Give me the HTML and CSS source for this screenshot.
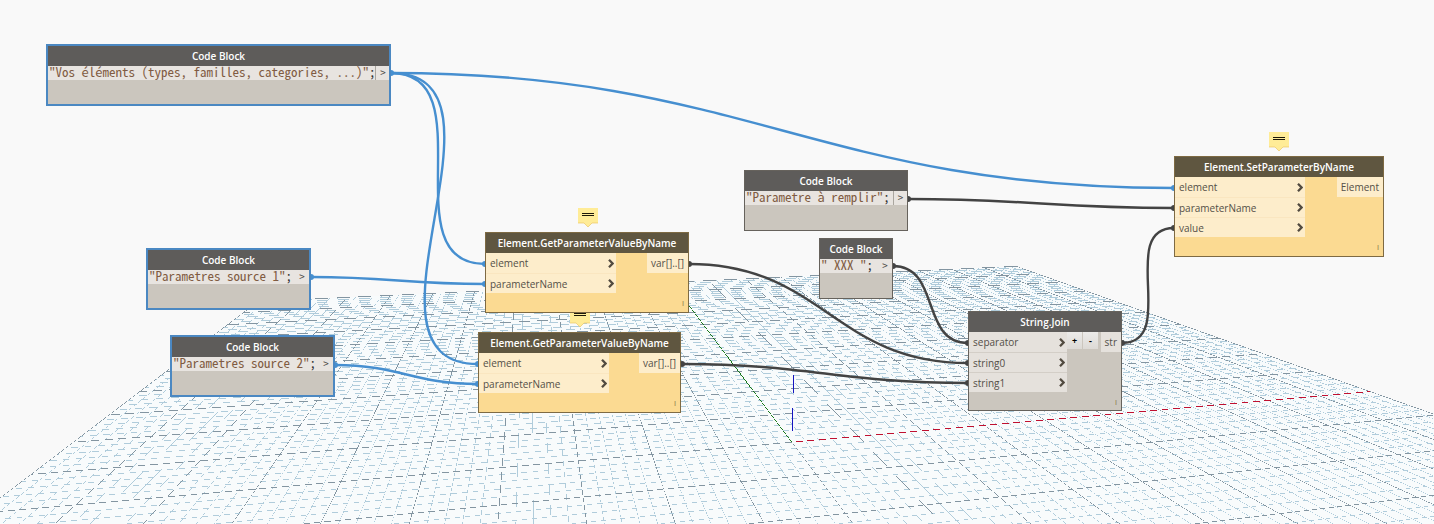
FILE: index.html
```html
<!DOCTYPE html>
<html lang="fr">
<head>
<meta charset="utf-8">
<title>Workspace</title>
<link rel="stylesheet" href="styles.css">
</head>
<body>
<main class="workspace">
  <svg class="layer" id="grid" aria-hidden="true"></svg>

  <svg class="layer" aria-hidden="true">
    <g class="wire wire-selected">
      <path d="M391 73C747 73 818 188 1174 188"/>
      <path d="M391 73C487 73 389 264 485 264"/>
      <path d="M391 73C528 73 341 364 478 364"/>
      <path d="M311 277C389 277 407 284 485 284"/>
      <path d="M335 365C400 365 413 384 478 384"/>
    </g>
    <g class="wire">
      <path d="M689 264C822 264 835 363 968 363"/>
      <path d="M682 364C811 364 839 383 968 383"/>
      <path d="M908 199C1028 199 1054 208 1174 208"/>
      <path d="M893 266C941 266 920 343 968 343"/>
      <path d="M1122 343C1179 343 1117 228 1174 228"/>
    </g>
    <g class="dot-selected">
      <circle cx="391" cy="73" r="3"/><circle cx="311" cy="277" r="3"/><circle cx="335" cy="365" r="3"/>
      <circle cx="1174" cy="188" r="3"/><circle cx="485" cy="264" r="3"/><circle cx="485" cy="284" r="3"/>
      <circle cx="478" cy="364" r="3"/><circle cx="478" cy="384" r="3"/>
    </g>
    <g class="dot">
      <circle cx="689" cy="264" r="3"/><circle cx="682" cy="364" r="3"/><circle cx="908" cy="199" r="3"/>
      <circle cx="893" cy="266" r="3"/><circle cx="1122" cy="343" r="3"/><circle cx="968" cy="343" r="3"/>
      <circle cx="968" cy="363" r="3"/><circle cx="968" cy="383" r="3"/><circle cx="1174" cy="208" r="3"/>
      <circle cx="1174" cy="228" r="3"/>
    </g>
  </svg>

  <svg class="note note-get-1" viewBox="0 0 20 20" aria-hidden="true"><use href="#note"/></svg>
  <svg class="note note-get-2" viewBox="0 0 20 20" aria-hidden="true"><use href="#note"/></svg>
  <svg class="note note-set" viewBox="0 0 20 20" aria-hidden="true"><use href="#note"/></svg>

  <section class="node code selected code-elements">
    <h2 class="title">Code Block</h2>
    <div class="editor"><code>"Vos éléments (types, familles, categories, ...)"<b>;</b></code><span class="out ruled">&gt;</span></div>
  </section>
  <section class="node code selected code-source-1">
    <h2 class="title">Code Block</h2>
    <div class="editor"><code>"Parametres source 1"<b>;</b></code><span class="out">&gt;</span></div>
  </section>
  <section class="node code selected code-source-2">
    <h2 class="title">Code Block</h2>
    <div class="editor"><code>"Parametres source 2"<b>;</b></code><span class="out">&gt;</span></div>
  </section>
  <section class="node code code-target">
    <h2 class="title">Code Block</h2>
    <div class="editor"><code>"Parametre à remplir"<b>;</b></code><span class="out ruled">&gt;</span></div>
  </section>
  <section class="node code code-separator">
    <h2 class="title">Code Block</h2>
    <div class="editor"><code>" XXX "<b>;</b></code><span class="out">&gt;</span></div>
  </section>

  <section class="node warning get-1">
    <h2 class="title">Element.GetParameterValueByName</h2>
    <div class="ports">
      <ul class="inputs">
        <li>element<svg class="chevron" viewBox="0 0 6 9"><use href="#chevron"/></svg></li>
        <li>parameterName<svg class="chevron" viewBox="0 0 6 9"><use href="#chevron"/></svg></li>
      </ul>
      <span class="output">var[]..[]</span>
    </div>
    <footer class="lacing">l</footer>
  </section>
  <section class="node warning get-2">
    <h2 class="title">Element.GetParameterValueByName</h2>
    <div class="ports">
      <ul class="inputs">
        <li>element<svg class="chevron" viewBox="0 0 6 9"><use href="#chevron"/></svg></li>
        <li>parameterName<svg class="chevron" viewBox="0 0 6 9"><use href="#chevron"/></svg></li>
      </ul>
      <span class="output">var[]..[]</span>
    </div>
    <footer class="lacing">l</footer>
  </section>
  <section class="node warning set">
    <h2 class="title">Element.SetParameterByName</h2>
    <div class="ports">
      <ul class="inputs">
        <li>element<svg class="chevron" viewBox="0 0 6 9"><use href="#chevron"/></svg></li>
        <li>parameterName<svg class="chevron" viewBox="0 0 6 9"><use href="#chevron"/></svg></li>
        <li>value<svg class="chevron" viewBox="0 0 6 9"><use href="#chevron"/></svg></li>
      </ul>
      <span class="output">Element</span>
    </div>
    <footer class="lacing">l</footer>
  </section>
  <section class="node join">
    <h2 class="title">String.Join</h2>
    <div class="ports">
      <ul class="inputs">
        <li>separator<svg class="chevron" viewBox="0 0 6 9"><use href="#chevron"/></svg></li>
        <li>string0<svg class="chevron" viewBox="0 0 6 9"><use href="#chevron"/></svg></li>
        <li>string1<svg class="chevron" viewBox="0 0 6 9"><use href="#chevron"/></svg></li>
      </ul>
      <div class="steppers"><button type="button">+</button><button type="button">-</button></div>
      <span class="output">str</span>
    </div>
    <footer class="lacing">l</footer>
  </section>
</main>

<svg class="defs" aria-hidden="true">
  <symbol id="chevron" viewBox="0 0 6 9"><path d="M1 .8 4.6 4.5 1 8.2" fill="none" stroke="#524b40" stroke-width="2.3"/></symbol>
  <symbol id="note" viewBox="0 0 20 20">
    <path d="M0 0H20V15H14L10 19 6 15H0Z" fill="#ffec97"/>
    <path d="M0 15H6L10 19 14 15H20" fill="none" stroke="#ecc766" stroke-width=".7"/>
    <path d="M4 5.5H16M4 7.5H16" stroke="#1c1808" stroke-width="1.2"/>
  </symbol>
</svg>
<script src="grid.js"></script>
</body>
</html>
```
FILE: grid.js
```js
// Perspective ground plane: 10 major cells each side of the origin, 5 minor cells per major.
const NS = "http://www.w3.org/2000/svg";
const svg = document.getElementById("grid");
const origin = [791.5, 442];
const vanishX = [4824, 89];
const vanishY = [530, 94];
const limit = 2400;

function project(x, y) {
  const s = x * 0.01675, t = y * 0.08505, w = 1 + s + t;
  return [0, 1].map(i => (origin[i] + s * vanishX[i] + t * vanishY[i]) / w);
}
function add(d, name) {
  const path = document.createElementNS(NS, "path");
  path.setAttribute("d", d);
  path.setAttribute("class", name);
  svg.append(path);
}

// Draws a line thinner than a pixel: it shows only where it passes near a pixel centre,
// which breaks shallow lines into dashes and diagonal ones into dots.
function thin(a, b, c, d, weight) {
  const p = project(a, b), q = project(c, d);
  const across = Math.abs(q[0] - p[0]) > Math.abs(q[1] - p[1]);
  const k = across ? 0 : 1, j = 1 - k;
  const slope = (q[k] - p[k]) / (q[j] - p[j] || 0.001);
  const lo = Math.min(p[j], q[j]), hi = Math.min(Math.max(p[j], q[j]), limit);
  let out = "";
  for (let n = Math.floor(lo); n < hi; n++) {
    const from = Math.max(lo, n), to = Math.min(hi, n + weight);
    if (to <= from) continue;
    const u = p[k] + (from - p[j]) * slope, v = p[k] + (to - p[j]) * slope;
    const u1 = Math.round(Math.min(u, v)), v1 = Math.round(Math.max(u, v));
    if (v1 <= u1 || v1 < 0 || u1 > limit) continue;
    out += across ? `M${u1} ${n + 0.5}H${v1}` : `M${n + 0.5} ${u1}V${v1}`;
  }
  return out;
}

const near = -4.6;
const corners = [[-10, near], [-10, 10], [10, 10], [10, near]].map(c => project(...c).join(" "));
add(`M${corners.join("L")}Z`, "ground");
let minor = "", major = "";
for (let i = -50; i <= 50; i++) {
  const p = i / 5, weight = i % 5 ? 0.5 : 0.6;
  let d = thin(p, near, p, 10, weight);
  if (p >= near) d += thin(-10, p, 10, p, weight);
  if (i % 5) minor += d; else major += d;
}
add(minor, "minor");
add(major, "major");
add(thin(0, 0, 10, 0, 0.6), "axis-x");
add(thin(0, 0, 0, 10, 0.8), "axis-y");
add("M793 375h1v18h-1zM792 408h1v23h-1z", "axis-z");
```
FILE: styles.css
```css
* { box-sizing: border-box; }
body {
  margin: 0;
  background: #f9f9f9;
  font-family: "Open Sans", "Noto Sans", sans-serif;
}
.workspace {
  position: relative;
  height: 100vh;
  overflow: hidden;
}
.layer {
  position: absolute;
  inset: 0;
  width: 100%;
  height: 100%;
}
.defs { position: absolute; width: 0; height: 0; }

#grid path { fill: none; stroke-width: 1; shape-rendering: crispEdges; }
#grid .ground { fill: #f8fbfc; }
#grid .minor { stroke: #b0ccdb; }
#grid .major { stroke: #8395a1; }
#grid .axis-x { stroke: #c01030; }
#grid .axis-y { stroke: #187818; }
#grid .axis-z { fill: #1414c0; }

.wire { fill: none; stroke: #434343; stroke-width: 2.4; }
.wire-selected { stroke: #468fd0; }
.dot { fill: #434343; }
.dot-selected { fill: #468fd0; }

.note { position: absolute; width: 20px; height: 20px; }
.note-get-1 { left: 578px; top: 208px; }
.note-get-2 { left: 570px; top: 308px; }
.note-set { left: 1269px; top: 132px; }

.node {
  position: absolute;
  border: 1px solid #66625c;
  background: #cbc6be;
  color: #544f48;
}
.title {
  margin: 0;
  height: 20px;
  background: #5e5c5a;
  color: #fff;
  font-size: 10px;
  line-height: 20px;
  font-weight: 600;
  text-align: center;
  white-space: nowrap;
}
.code { padding-bottom: 25px; }
.selected { padding-bottom: 24px; border: 2px solid #4b88c2; }

.editor {
  display: flex;
  height: 14px;
  background: #e8e4e0;
  font: 13px/12px "Noto Sans Mono CJK SC", "Liberation Mono", monospace;
  white-space: pre;
}
.editor code { flex: 1; padding-left: 1px; color: #805b42; font: inherit; }
.editor b { color: #333; font-weight: 400; }
.out { flex: none; width: 14px; text-align: center; color: #4c4945; font-size: 11px; }
.ruled { border-left: 1px solid #aaa69f; }

.code-elements { left: 46px; top: 44px; width: 345px; }
.code-source-1 { left: 146px; top: 248px; width: 165px; }
.code-source-2 { left: 170px; top: 335px; width: 165px; }
.code-target { left: 744px; top: 170px; width: 164px; }
.code-separator { left: 819px; top: 238px; width: 74px; }

.ports { display: flex; align-items: flex-start; font-size: 10px; line-height: 20px; }
.inputs {
  width: 130px;
  margin: 0;
  padding: 0;
  list-style: none;
  background: #e5e1dc;
}
.inputs li {
  display: flex;
  align-items: center;
  justify-content: space-between;
  height: 20px;
  padding: 0 2px 0 4px;
}
.inputs li + li { border-top: 1px solid #d3cec7; }
.chevron { width: 6px; height: 9px; }
.output { margin-left: auto; padding: 0 4px; background: #e5e1dc; }
.lacing {
  height: 19px;
  padding-right: 4px;
  color: #8a7448;
  font-size: 8px;
  line-height: 20px;
  text-align: right;
}

.warning { border-color: #7e6a43; background: #fbda92; }
.warning .title { background: #5f5640; }
.warning .inputs, .warning .output { background: #fdedcb; }
.warning .inputs li + li { border-color: #fae6c0; }

.get-1 { left: 485px; top: 232px; width: 204px; }
.get-2 { left: 478px; top: 332px; width: 203px; }
.set { left: 1174px; top: 156px; width: 210px; }
.join { left: 968px; top: 311px; width: 154px; }
.join .inputs { width: 98px; }
.join .lacing { height: 18px; }

.steppers { display: flex; }
.steppers button {
  width: 16px;
  height: 17px;
  padding: 0;
  border: 0;
  border-right: 1px solid #cbc6be;
  background: linear-gradient(#ecebe9, #dddad6);
  color: #000;
  font: 700 9px/14px "Open Sans", sans-serif;
}
```
